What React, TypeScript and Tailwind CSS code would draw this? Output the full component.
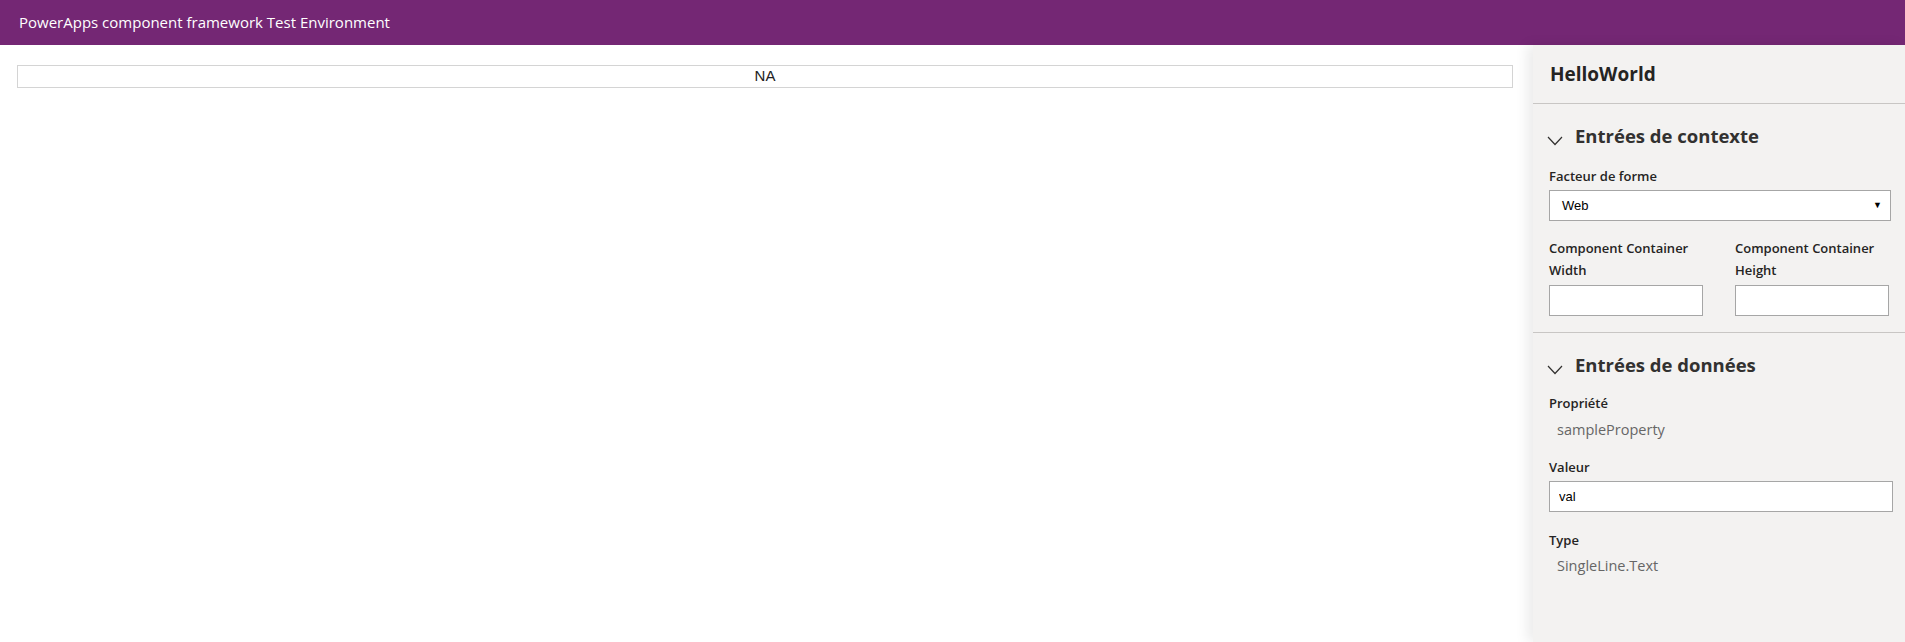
export default function App() {
  return (
    <div
      className="flex flex-col h-screen overflow-hidden bg-white text-[#323130]"
      style={{ fontFamily: '"Open Sans", "Noto Sans", sans-serif' }}
    >
      <header className="h-[45px] shrink-0 bg-[#742774] flex items-center px-[19px]">
        <span className="text-white text-[15px]">PowerApps component framework Test Environment</span>
      </header>

      <div className="flex flex-1 min-h-0">
        <main className="flex-1 pt-5 pl-[17px] pr-5">
          <div className="h-[23px] border border-[#d4d4d4] flex items-center justify-center text-[15px] text-[#222] font-['Liberation_Sans',sans-serif]">
            NA
          </div>
        </main>

        <aside className="w-[372px] shrink-0 bg-[#f3f2f1] shadow-[-6px_0_12px_rgba(0,0,0,0.08)] flex flex-col">
          <div className="h-[59px] shrink-0 border-b border-[#c8c6c4] flex items-center pl-[17px]">
            <h1 className="text-[19px] font-bold text-[#252423]">HelloWorld</h1>
          </div>

          <section className="pt-[18px] pb-4 pl-4 pr-[14px] border-b border-[#c8c6c4]">
            <SectionTitle title="Entrées de contexte" />
            <label className="block mt-4 mb-1 text-[13px] leading-5 font-semibold text-[#252423]">
              Facteur de forme
            </label>
            <div className="h-[31px] bg-white border border-[#a6a6a6] flex items-center justify-between pl-3 pr-2 text-[13px] text-black font-['Liberation_Sans',sans-serif]">
              <span>Web</span>
              <span className="text-[9px]">▼</span>
            </div>

            <div className="grid grid-cols-2 gap-[30px] mt-4">
              {["Width", "Height"].map((d) => (
                <div key={d}>
                  <label className="block mb-1 text-[13px] leading-[22px] font-semibold text-[#252423]">
                    Component Container
                    <br />
                    {d}
                  </label>
                  <input className="w-[154px] h-[31px] bg-white border border-[#a6a6a6] outline-none" />
                </div>
              ))}
            </div>
          </section>

          <section className="pt-[18px] pl-4 pr-3">
            <SectionTitle title="Entrées de données" />
            <div className="mt-[14px] text-[13px] leading-5 font-semibold text-[#252423]">Propriété</div>
            <div className="mt-[6px] pl-2 text-[14.5px] leading-[22px] text-[#666]">sampleProperty</div>
            <div className="mt-4 mb-1 text-[13px] leading-5 font-semibold text-[#252423]">Valeur</div>
            <input
              defaultValue="val"
              className="w-full h-[31px] bg-white border border-[#a6a6a6] px-[9px] text-[13px] text-black outline-none font-['Liberation_Sans',sans-serif]"
            />
            <div className="mt-[18px] text-[13px] leading-5 font-semibold text-[#252423]">Type</div>
            <div className="mt-[5px] pl-2 text-[14.5px] leading-[22px] text-[#666]">SingleLine.Text</div>
          </section>
        </aside>
      </div>
    </div>
  );
}

function SectionTitle({ title }: { title: string }) {
  return (
    <div className="h-7 flex items-center">
      <svg width="16" height="10" viewBox="0 0 16 10" className="mt-[10px] ml-[-2px] mr-[12px]">
        <polyline points="1,1 8,8.5 15,1" fill="none" stroke="#323130" strokeWidth="1.2" />
      </svg>
      <h2 className="text-[18.5px] font-bold text-[#323130]">{title}</h2>
    </div>
  );
}
